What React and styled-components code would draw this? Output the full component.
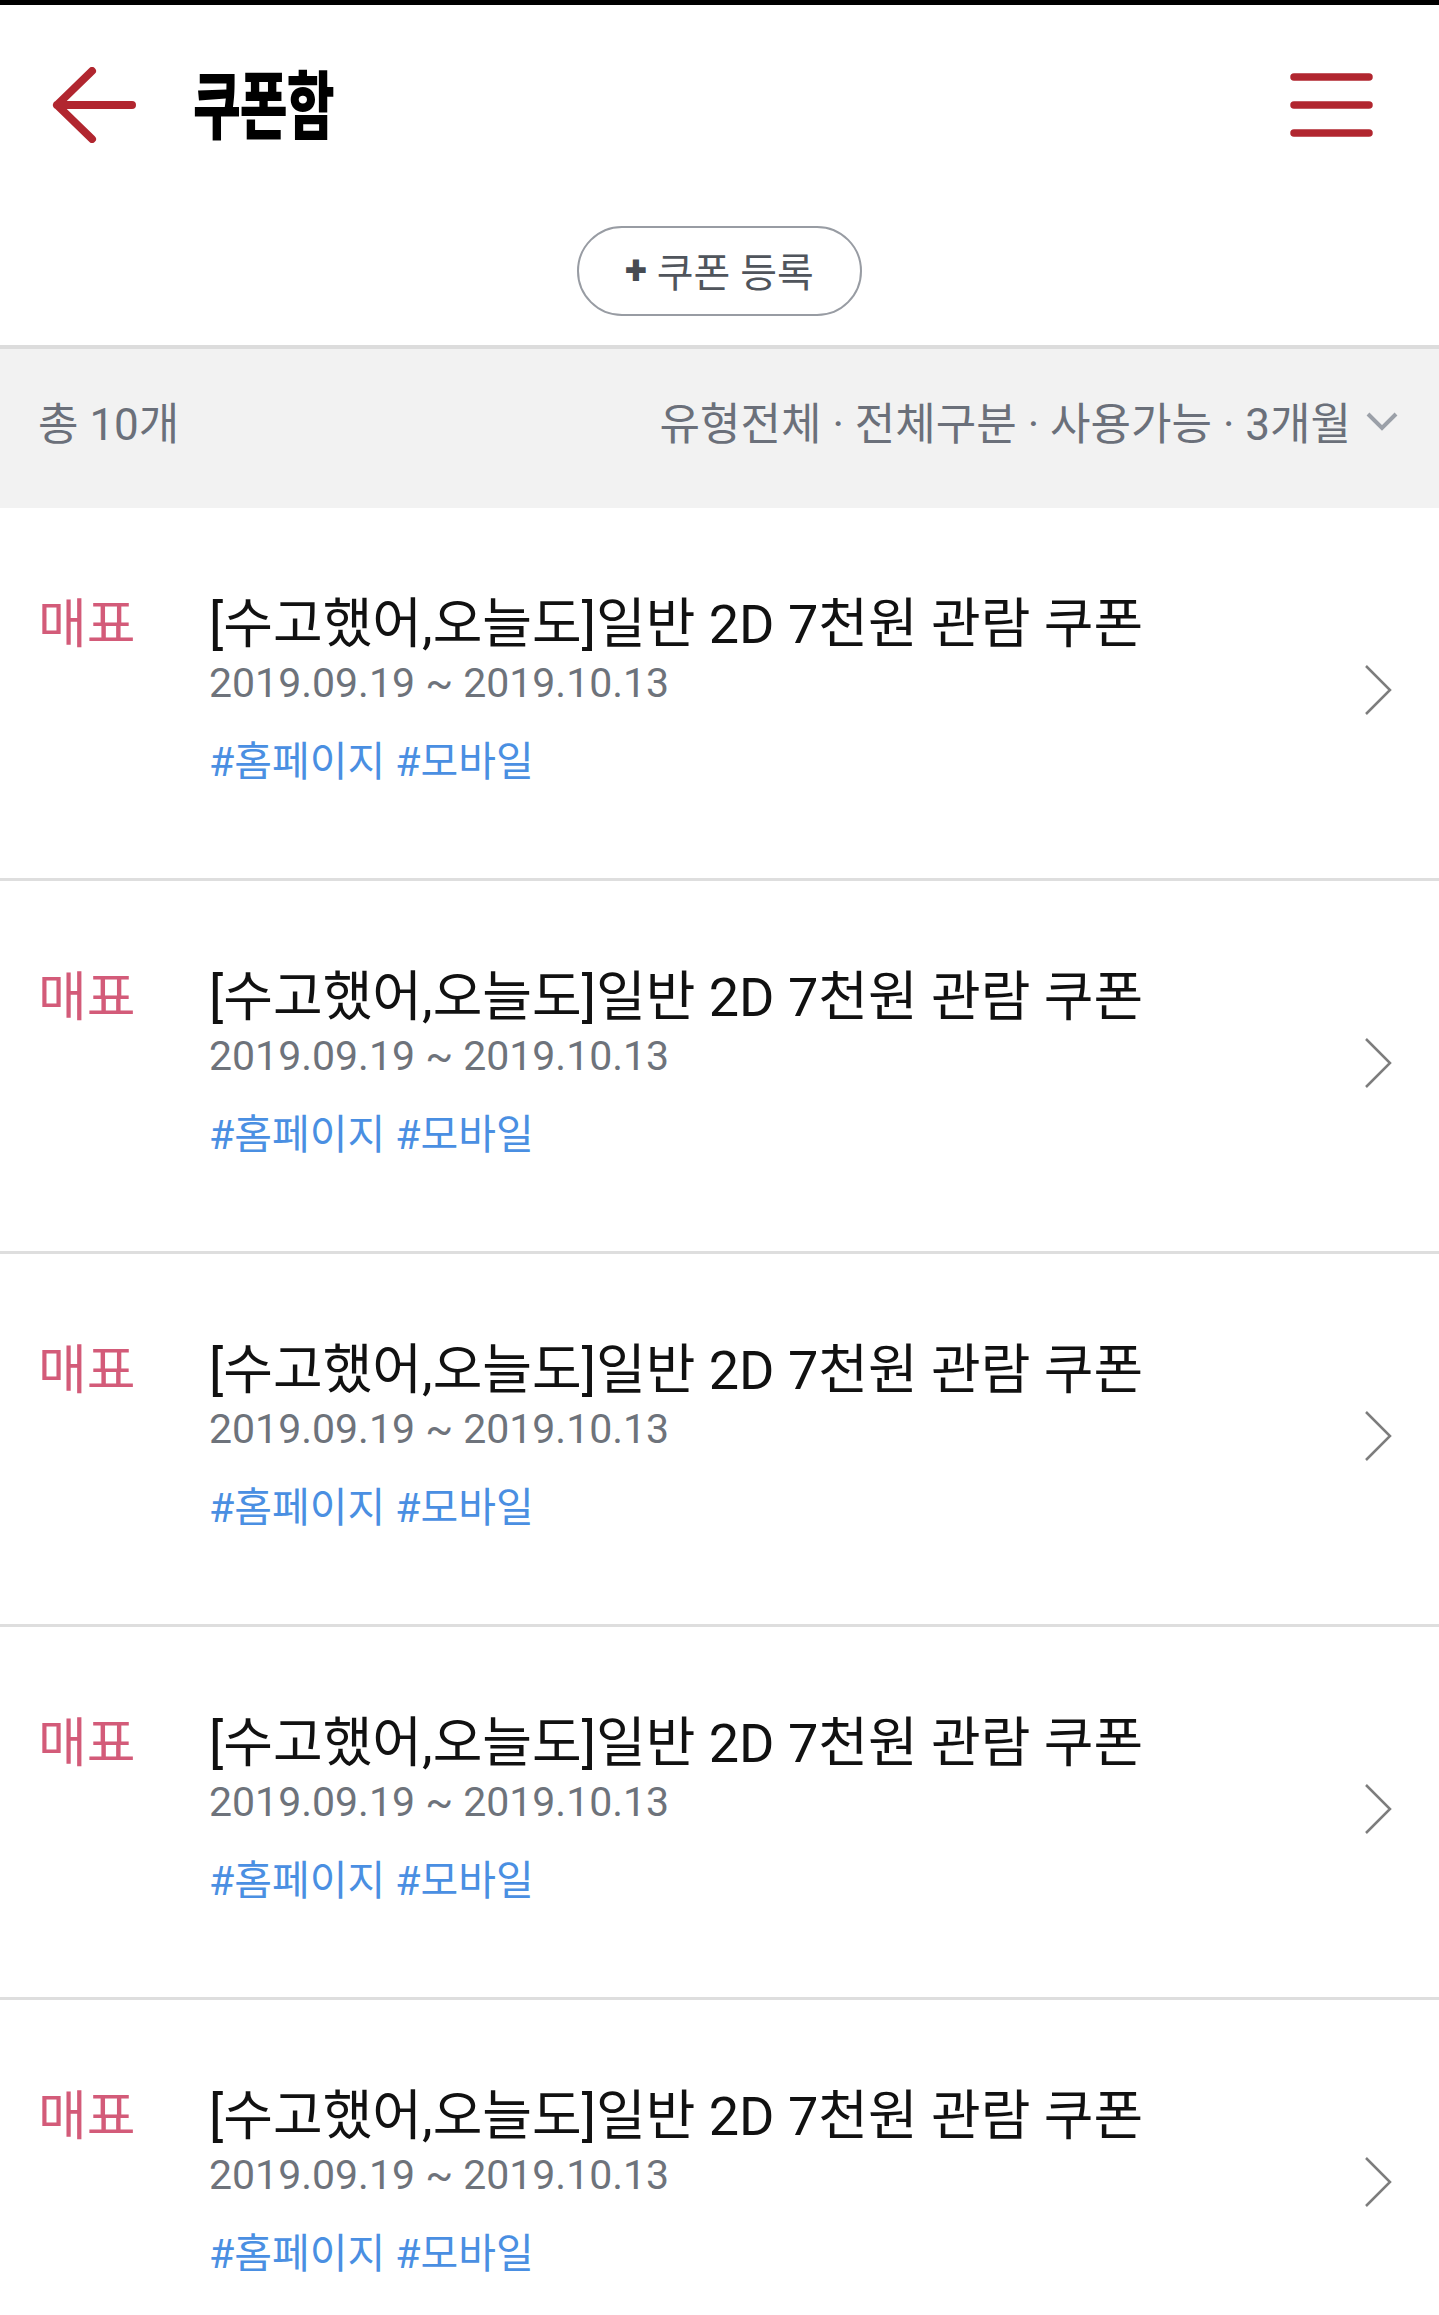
import styled, { createGlobalStyle } from "styled-components";

const GlobalStyle = createGlobalStyle`
    * {
        box-sizing: border-box;
    }
    body {
        margin: 0;
        background: #fff;
        font-family: Roboto, "Noto Sans CJK KR", sans-serif;
    }
    ul {
        margin: 0;
        padding: 0;
        list-style: none;
    }
`;

const Page = styled.div`
    width: 100%;
    border-top: 5px solid #000;
    background: #fff;
`;

const Header = styled.header`
    height: 200px;
    display: flex;
    align-items: center;
    padding: 0 66px 0 52px;
`;

const IconButton = styled.button`
    display: flex;
    align-items: center;
    padding: 0;
    border: 0;
    background: none;
    cursor: pointer;
`;

const PageTitle = styled.h1`
    flex: 1;
    margin: -6px 0 0 57px;
    font-family: "Noto Sans CJK KR", sans-serif;
    font-size: 52px;
    font-weight: 900;
    line-height: 1;
    letter-spacing: -1px;
    color: #000;
    transform: scaleY(1.42);
    transform-origin: center;
`;

const RegisterRow = styled.div`
    display: flex;
    justify-content: center;
    padding: 21px 0 29px;
`;

const RegisterButton = styled.button`
    width: 285px;
    height: 90px;
    display: flex;
    align-items: center;
    justify-content: center;
    gap: 10px;
    border: 2.5px solid #989ca3;
    border-radius: 45px;
    background: #fff;
    font-family: Roboto, "Noto Sans CJK KR", sans-serif;
    font-size: 40px;
    color: #50555c;
    padding: 0 0 2px;
`;

const Plus = styled.span`
    font-weight: 900;
    color: #474b52;
`;

const FilterBar = styled.div`
    height: 163px;
    display: flex;
    align-items: center;
    justify-content: space-between;
    padding: 0 40px 16px 38px;
    border-top: 4px solid #dcdcdc;
    background: #f2f2f2;
    font-size: 44px;
    color: #6b707a;
`;

const FilterOptions = styled.div`
    display: flex;
    align-items: center;
    gap: 14px;
`;

const CouponList = styled.ul``;

const Item = styled.li`
    display: flex;
    align-items: center;
    padding: 87px 47px 93px 38px;
    border-bottom: 3px solid #dedede;
`;

const Kind = styled.span`
    width: 171px;
    flex-shrink: 0;
    align-self: flex-start;
    font-size: 53px;
    line-height: 60px;
    color: #d35b79;
`;

const Info = styled.div`
    flex: 1;
    display: flex;
    flex-direction: column;
`;

const Title = styled.p`
    margin: 0;
    font-size: 54px;
    line-height: 60px;
    color: #111;
`;

const Period = styled.p`
    margin: 4px 0 0;
    font-size: 41px;
    line-height: 48px;
    color: #6e737b;
`;

const Tags = styled.p`
    margin: 32px 0 0;
    font-size: 41px;
    line-height: 46px;
    color: #4a8fe2;
`;

const coupons = Array.from({ length: 5 }, (_, i) => ({
    id: i,
    kind: "매표",
    title: "[수고했어,오늘도]일반 2D 7천원 관람 쿠폰",
    period: "2019.09.19 ~ 2019.10.13",
    tags: ["홈페이지", "모바일"],
}));

const BackIcon = () => (
    <svg width="84" height="76" viewBox="0 0 84 76">
        <path
            d="M80 38H5M40 4L5 38l35 34"
            fill="none"
            stroke="#b1262f"
            strokeWidth="8"
            strokeLinecap="round"
            strokeLinejoin="round"
        />
    </svg>
);

const MenuIcon = () => (
    <svg width="83" height="64" viewBox="0 0 83 64">
        <path
            d="M4 4h75M4 32h75M4 60h75"
            stroke="#b1262f"
            strokeWidth="7.5"
            strokeLinecap="round"
        />
    </svg>
);

const ChevronDown = () => (
    <svg width="34" height="20" viewBox="0 0 34 20">
        <polyline
            points="3,3 17,17 31,3"
            fill="none"
            stroke="#9ba0a8"
            strokeWidth="4"
        />
    </svg>
);

const ChevronRight = () => (
    <svg width="28" height="52" viewBox="0 0 28 52">
        <polyline
            points="2,2 26,26 2,50"
            fill="none"
            stroke="#7d7d7d"
            strokeWidth="2.5"
        />
    </svg>
);

const App = () => {
    return (
        <Page>
            <GlobalStyle />
            <Header>
                <IconButton aria-label="뒤로">
                    <BackIcon />
                </IconButton>
                <PageTitle>쿠폰함</PageTitle>
                <IconButton aria-label="메뉴">
                    <MenuIcon />
                </IconButton>
            </Header>
            <RegisterRow>
                <RegisterButton>
                    <Plus>+</Plus>
                    <span>쿠폰 등록</span>
                </RegisterButton>
            </RegisterRow>
            <FilterBar>
                <span>총 10개</span>
                <FilterOptions>
                    <span>유형전체 · 전체구분 · 사용가능 · 3개월</span>
                    <ChevronDown />
                </FilterOptions>
            </FilterBar>
            <CouponList>
                {coupons.map((item) => (
                    <Item key={item.id}>
                        <Kind>{item.kind}</Kind>
                        <Info>
                            <Title>{item.title}</Title>
                            <Period>{item.period}</Period>
                            <Tags>{item.tags.map((tag) => `#${tag}`).join(" ")}</Tags>
                        </Info>
                        <ChevronRight />
                    </Item>
                ))}
            </CouponList>
        </Page>
    );
};

export default App;
